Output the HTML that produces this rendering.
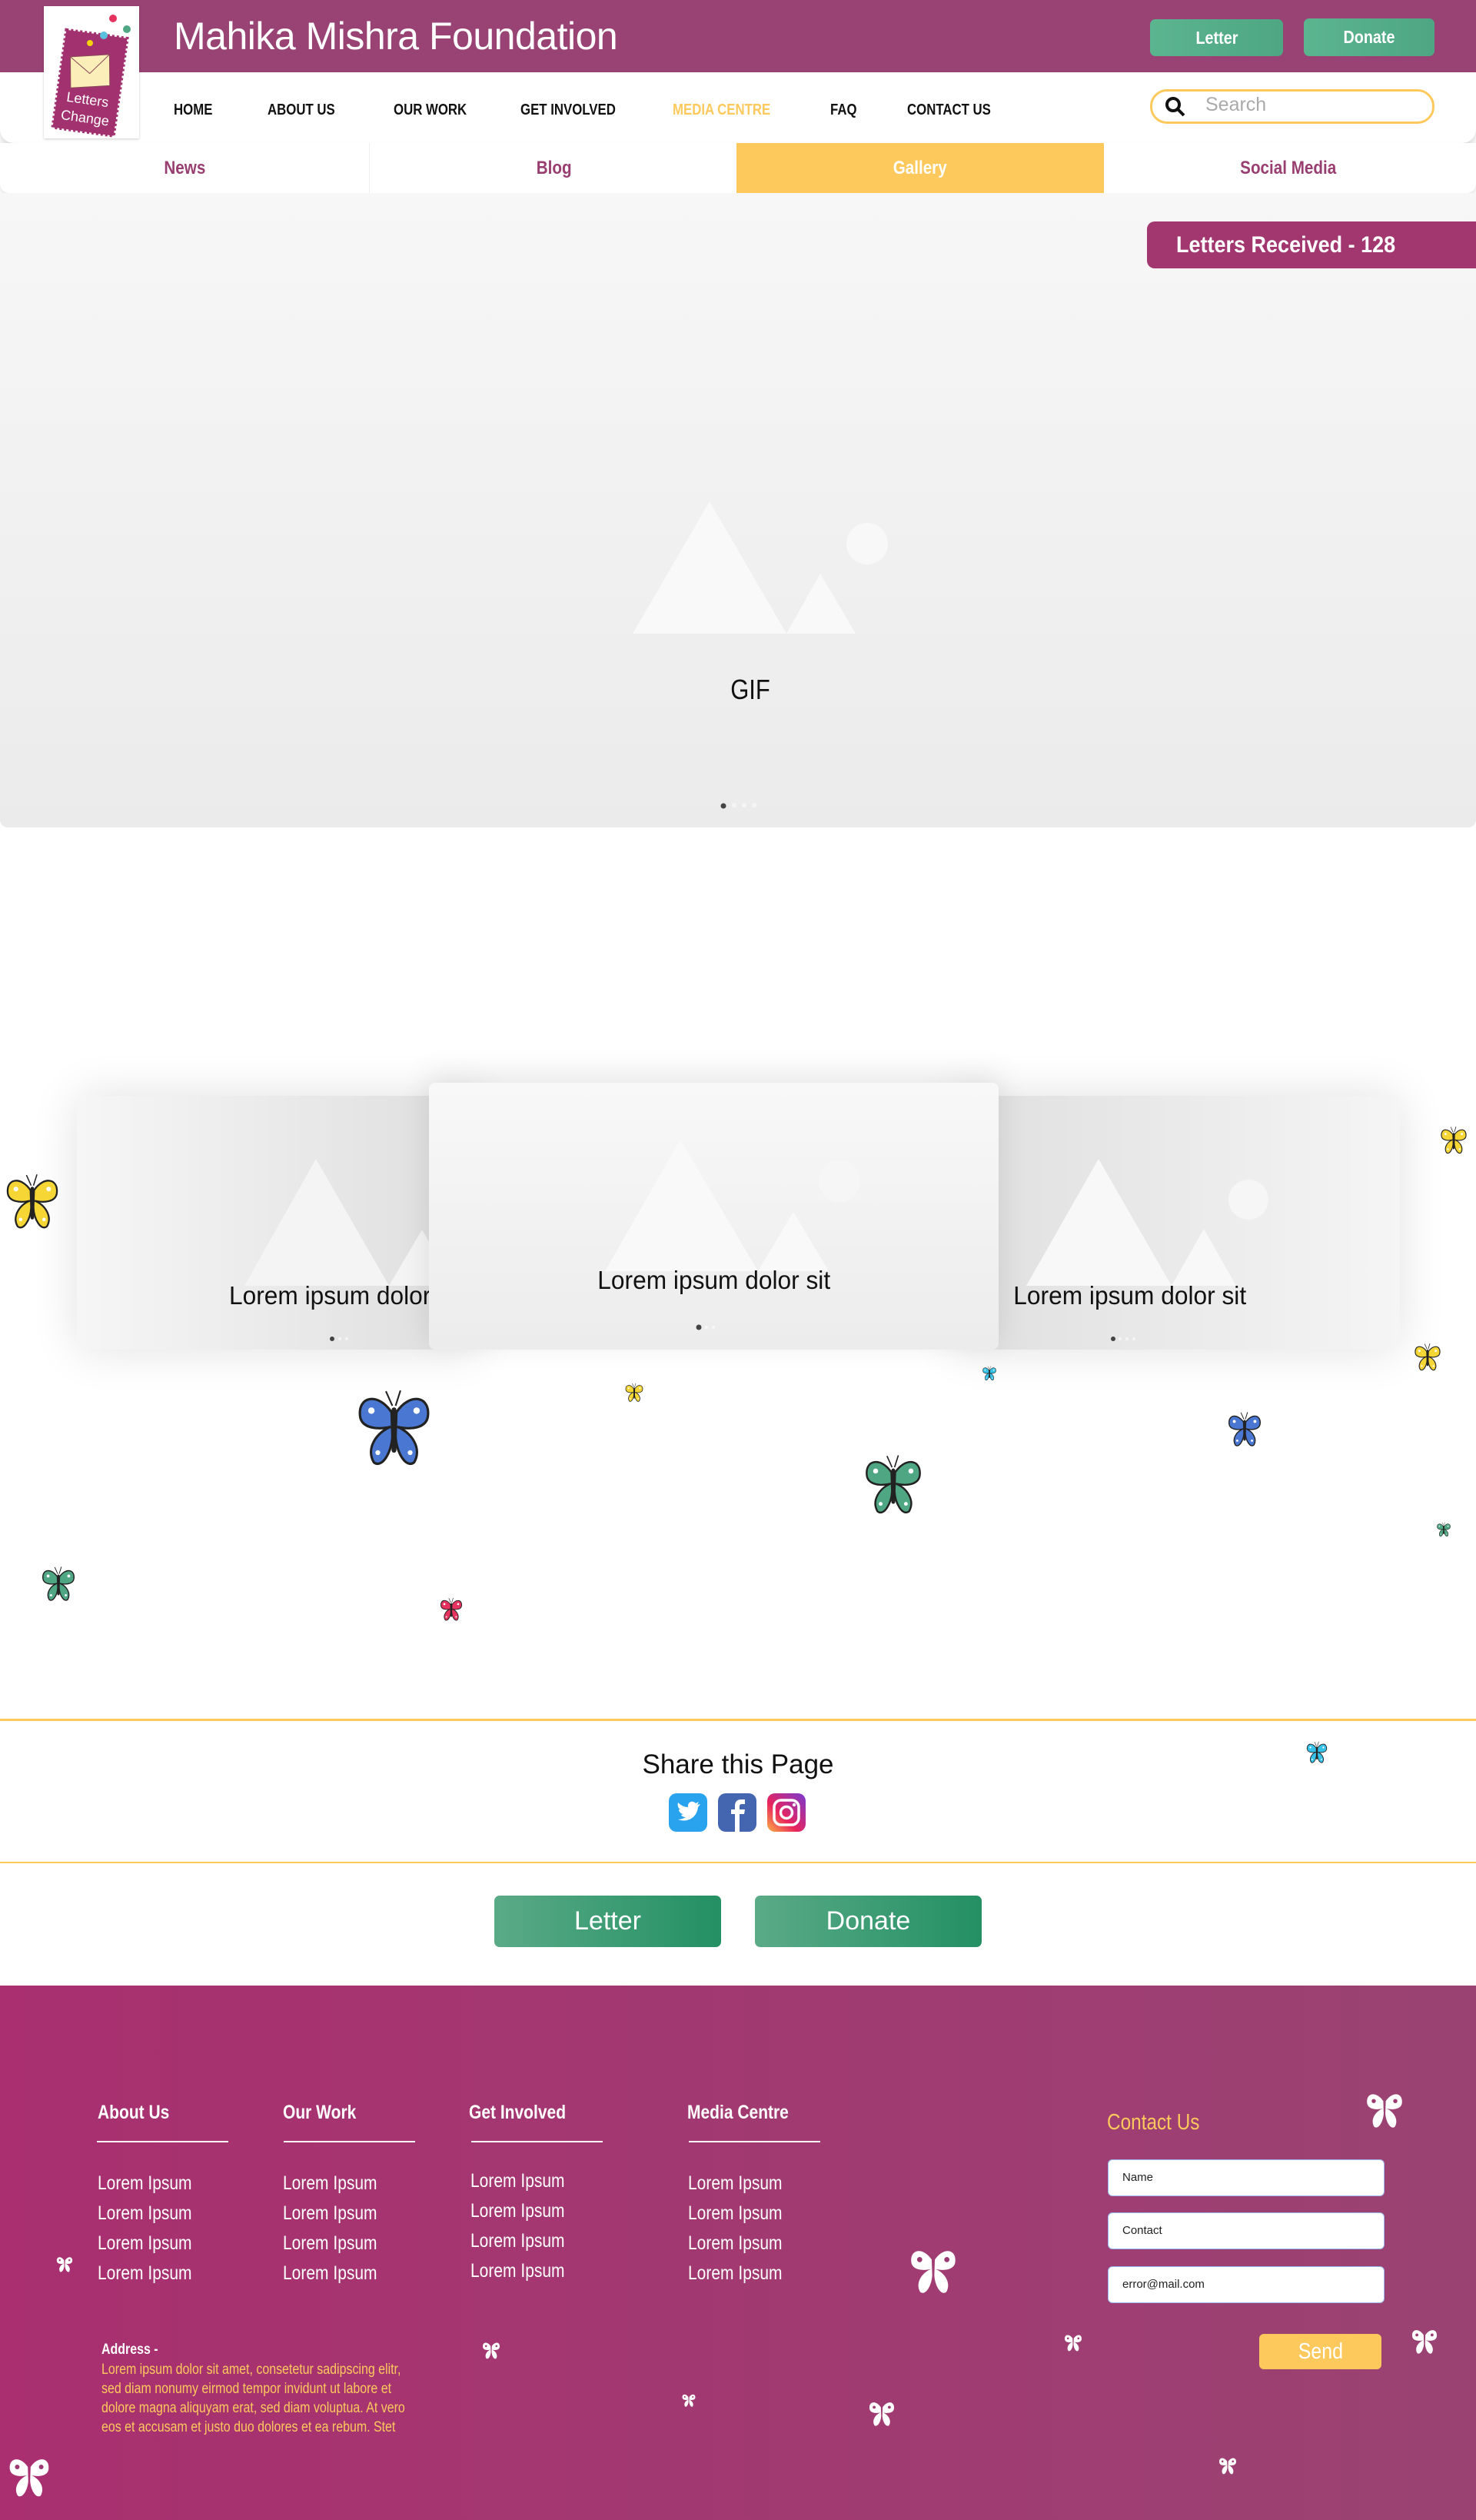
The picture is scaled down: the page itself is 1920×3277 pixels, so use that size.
<!DOCTYPE html>
<html><head><meta charset="utf-8">
<style>
*{margin:0;padding:0;box-sizing:border-box}
body{width:1920px;height:3277px;position:relative;background:#fff;font-family:"Liberation Sans Narrow","Liberation Sans",sans-serif;overflow:hidden}
.a{position:absolute}
.n{display:inline-block;transform:scaleX(.84);transform-origin:left center;white-space:nowrap}
.nc{display:inline-block;transform:scaleX(.86);transform-origin:center;white-space:nowrap}
.hdr{left:0;top:0;width:1920px;height:94px;background:#984373}
.title{left:226px;top:18px;color:#fff;font-family:"Liberation Sans",sans-serif;font-size:50px;letter-spacing:-0.5px}
.btn{background:linear-gradient(90deg,#5bb58f,#4ea683);color:#fff;border-radius:7px;text-align:center;font-weight:bold}
.nav{left:0;top:94px;width:1920px;height:92px;background:#fff;border-radius:0 0 18px 18px;box-shadow:0 6px 10px rgba(0,0,0,.15)}
.nav span{position:absolute;top:38px;font-size:20px;font-weight:bold;color:#111;transform:scaleX(.84);transform-origin:left;white-space:nowrap}
.tabs{left:0;top:186px;width:1920px;height:65px;background:#fff;border-radius:0 0 12px 12px;box-shadow:0 4px 8px rgba(0,0,0,.12)}
.tab{position:absolute;top:0;width:480px;height:65px;text-align:center;line-height:65px;font-size:24px;font-weight:bold;color:#983e70}
.hero{left:0;top:251px;width:1920px;height:825px;background:linear-gradient(#f7f7f7,#ebebeb);border-radius:0 0 10px 10px}
.card{border-radius:8px}
.cap{font-size:33px;color:#111;text-align:center}
.fh{color:#fff;font-size:25px;font-weight:bold}
.fl{color:#fff;font-size:25px}
.line{height:2px;background:#fff;width:171px}
.inp{left:1441px;width:360px;height:48px;background:#fff;border-radius:6px;border:1px solid #9ab8ee;font-size:15px;padding:0 18px;line-height:46px;color:#222;font-family:"Liberation Sans",sans-serif}
</style></head><body>
<svg width="0" height="0" style="position:absolute">
<defs>
<symbol id="bf" viewBox="0 0 100 100">
<path d="M48 22 L40 4 M52 22 L58 3" stroke="#222" stroke-width="2" fill="none"/>
<path d="M47 30 C30 5 5 10 8 35 C10 50 30 52 46 48 C28 55 15 75 25 92 C35 100 47 80 48 60 Z" fill="currentColor" stroke="#222" stroke-width="3"/>
<path d="M53 30 C70 5 95 10 92 35 C90 50 70 52 54 48 C72 55 85 75 75 92 C65 100 53 80 52 60 Z" fill="currentColor" stroke="#222" stroke-width="3"/>
<rect x="47" y="24" width="6" height="56" rx="3" fill="#222"/>
<circle cx="22" cy="28" r="4" fill="#fff"/><circle cx="78" cy="28" r="4" fill="#fff"/><circle cx="30" cy="80" r="3" fill="#fff"/><circle cx="70" cy="80" r="3" fill="#fff"/>
</symbol>
<symbol id="bw" viewBox="0 0 100 100">
<path d="M47 30 C30 5 5 10 8 35 C10 50 30 52 46 48 C28 55 15 75 25 92 C35 100 47 80 48 60 Z" fill="#fff"/>
<path d="M53 30 C70 5 95 10 92 35 C90 50 70 52 54 48 C72 55 85 75 75 92 C65 100 53 80 52 60 Z" fill="#fff"/>
<circle cx="24" cy="30" r="5" fill="#9b3a70"/><circle cx="76" cy="30" r="5" fill="#9b3a70"/>
</symbol>
</defs></svg>

<div class="a hdr"></div>
<div class="a title">Mahika Mishra Foundation</div>
<div class="a btn" style="left:1496px;top:25px;width:173px;height:48px;line-height:48px;font-size:23px"><span class="nc">Letter</span></div>
<div class="a btn" style="left:1696px;top:24px;width:170px;height:49px;line-height:49px;font-size:23px"><span class="nc">Donate</span></div>

<div class="a nav">
<span style="left:226px">HOME</span><span style="left:348px">ABOUT US</span><span style="left:512px">OUR WORK</span><span style="left:677px">GET INVOLVED</span><span style="left:875px;color:#fec95c">MEDIA CENTRE</span><span style="left:1080px">FAQ</span><span style="left:1180px">CONTACT US</span>
</div>
<div class="a" style="left:1496px;top:116px;width:370px;height:45px;border:3px solid #fec95c;border-radius:22px;background:#fff"></div>
<svg class="a" style="left:1514px;top:124px" width="30" height="30" viewBox="0 0 30 30"><circle cx="12" cy="12" r="8" stroke="#111" stroke-width="4" fill="none"/><path d="M18 18 L26 26" stroke="#111" stroke-width="4"/></svg>
<div class="a" style="left:1568px;top:122px;font-size:25px;color:#aaa;font-family:'Liberation Sans',sans-serif">Search</div>

<!-- logo -->
<div class="a" style="left:57px;top:8px;width:124px;height:172px;background:#fff;box-shadow:0 1px 3px rgba(0,0,0,.2)"></div>
<svg class="a" style="left:57px;top:8px" width="124" height="172" viewBox="0 0 124 172">
<g transform="rotate(8 62 100)"><rect x="20" y="36" width="80" height="128" fill="#a2316f" stroke="#a2316f" stroke-width="4" stroke-dasharray="3 3"/>
<path d="M30 70 L80 60 L86 100 L36 110 Z" fill="#fbeeb8" stroke="#8a4a5a"/><path d="M30 70 L58 88 L80 60" fill="none" stroke="#8a4a5a"/>
<text x="60" y="128" fill="#fff" font-size="18" text-anchor="middle" font-family="Liberation Sans">Letters</text>
<text x="60" y="152" fill="#fff" font-size="18" text-anchor="middle" font-family="Liberation Sans">Change</text></g>
<circle cx="90" cy="16" r="5" fill="#e6325f"/><circle cx="78" cy="38" r="5" fill="#5bc0de"/><circle cx="108" cy="30" r="5" fill="#4ea683"/><circle cx="60" cy="48" r="4" fill="#f5d20c"/>
</svg>

<div class="a tabs">
<div class="tab" style="left:0"><span class="nc">News</span></div>
<div class="tab" style="left:480px;border-left:1px solid #f0f0f0"><span class="nc">Blog</span></div>
<div class="tab" style="left:958px;width:478px;background:#fec95c;color:#fff"><span class="nc">Gallery</span></div>
<div class="tab" style="left:1436px"><span class="nc">Social Media</span></div>
</div>

<div class="a hero"></div>
<div class="a" style="left:1492px;top:288px;width:428px;height:61px;background:#a2366f;border-radius:10px 0 0 10px;color:#fff;font-size:30px;font-weight:bold;line-height:61px;padding-left:38px"><span class="n" style="transform:scaleX(.9)">Letters Received - 128</span></div>
<svg class="a" style="left:800px;top:640px" width="380" height="200"><path d="M23 184 L123 12 L223 184 Z M223 184 L267 106 L313 184 Z" fill="#f9f9f9"/><circle cx="328" cy="67" r="27" fill="#f8f8f8"/></svg>
<div class="a" style="left:900px;top:876px;width:152px;text-align:center;font-size:36px;color:#111;font-family:'Liberation Sans',sans-serif"><span class="nc">GIF</span></div>
<svg class="a" style="left:930px;top:1040px" width="60" height="14"><circle cx="11" cy="8" r="3.5" fill="#444"/><circle cx="25" cy="7" r="3" fill="#f5f5f5"/><circle cx="38" cy="7" r="3" fill="#f5f5f5"/><circle cx="51" cy="7" r="3" fill="#f5f5f5"/></svg>

<!-- carousel -->
<div class="a card" style="left:100px;top:1425px;width:520px;height:330px;box-shadow:0 0 60px rgba(0,0,0,.12);background:linear-gradient(90deg,#f6f6f6,#dedede)"></div>
<div class="a card" style="left:1240px;top:1425px;width:581px;height:330px;box-shadow:0 0 60px rgba(0,0,0,.12);background:linear-gradient(90deg,#dfdfdf,#f5f5f5)"></div>
<svg class="a" style="left:0;top:1400px" width="1920" height="380">
<path d="M318 272 L411 107 L506 272 Z M506 272 L549 199 L590 272 Z" fill="#f4f4f4"/>
<path d="M1335 272 L1429 107 L1524 272 Z M1524 272 L1566 198 L1608 272 Z" fill="#f8f8f8"/>
<circle cx="1624" cy="160" r="26" fill="#f6f6f6"/>
</svg>
<div class="a cap" style="left:298px;top:1666px;white-space:nowrap"><span class="n" style="transform:scaleX(.96)">Lorem ipsum dolor</span></div>
<div class="a cap" style="left:1280px;top:1666px;width:380px"><span class="nc" style="transform:scaleX(.96)">Lorem ipsum dolor sit</span></div>
<svg class="a" style="left:425px;top:1736px" width="40" height="10"><circle cx="7" cy="5" r="3" fill="#444"/><circle cx="17" cy="5" r="2" fill="#f5f5f5"/><circle cx="26" cy="5" r="2" fill="#f5f5f5"/></svg>
<svg class="a" style="left:1442px;top:1736px" width="40" height="10"><circle cx="6" cy="5" r="3" fill="#444"/><circle cx="15" cy="5" r="2" fill="#f5f5f5"/><circle cx="24" cy="5" r="2" fill="#f5f5f5"/><circle cx="33" cy="5" r="2" fill="#f5f5f5"/></svg>

<div class="a card" style="left:558px;top:1408px;width:741px;height:347px;box-shadow:0 -10px 40px rgba(0,0,0,.1);background:linear-gradient(#f8f8f8,#ececec)"></div>
<svg class="a" style="left:558px;top:1408px" width="741" height="347">
<path d="M229 245 L327 74 L428 245 Z M428 245 L474 168 L520 245 Z" fill="#f9f9f9"/>
<circle cx="534" cy="128" r="27" fill="#f6f6f6"/>
</svg>
<div class="a cap" style="left:729px;top:1646px;width:400px"><span class="nc" style="transform:scaleX(.96)">Lorem ipsum dolor sit</span></div>
<svg class="a" style="left:900px;top:1721px" width="60" height="10"><circle cx="9" cy="5" r="3.5" fill="#444"/><circle cx="19" cy="5" r="2" fill="#f7f7f7"/><circle cx="28" cy="5" r="2" fill="#f7f7f7"/></svg>

<!-- butterflies -->
<svg class="a" style="left:4px;top:1525px;color:#f5d634" width="76" height="76"><use href="#bf"/></svg>
<svg class="a" style="left:1872px;top:1464px;color:#f5d634" width="38" height="38"><use href="#bf"/></svg>
<svg class="a" style="left:1838px;top:1746px;color:#f5d634" width="38" height="38"><use href="#bf"/></svg>
<svg class="a" style="left:460px;top:1805px;color:#4a77d1" width="105" height="105"><use href="#bf"/></svg>
<svg class="a" style="left:812px;top:1798px;color:#f5d634" width="26" height="26"><use href="#bf"/></svg>
<svg class="a" style="left:1277px;top:1776px;color:#36c1e8" width="20" height="20"><use href="#bf"/></svg>
<svg class="a" style="left:1121px;top:1890px;color:#4ea683" width="82" height="82"><use href="#bf"/></svg>
<svg class="a" style="left:1595px;top:1835px;color:#4a77d1" width="48" height="48"><use href="#bf"/></svg>
<svg class="a" style="left:1868px;top:1979px;color:#4ea683" width="20" height="20"><use href="#bf"/></svg>
<svg class="a" style="left:52px;top:2036px;color:#4ea683" width="48" height="48"><use href="#bf"/></svg>
<svg class="a" style="left:571px;top:2077px;color:#e6325f" width="32" height="32"><use href="#bf"/></svg>
<svg class="a" style="left:1698px;top:2264px;color:#36c1e8" width="30" height="30"><use href="#bf"/></svg>

<!-- share -->
<div class="a" style="left:0;top:2235px;width:1920px;height:3px;background:#fec95c"></div>
<div class="a" style="left:760px;top:2275px;width:400px;text-align:center;font-size:35px;color:#111;font-family:'Liberation Sans',sans-serif">Share this Page</div>
<svg class="a" style="left:870px;top:2332px" width="180" height="50">
<rect x="0" y="0" width="50" height="50" rx="10" fill="#2aa3ef"/>
<path d="M12 34 C22 38 36 34 38 18 L41 14 L37 15 L39 11 L35 13 C30 8 24 12 25 18 C19 18 15 15 12 12 C11 16 12 19 15 21 L13 21 C13 24 16 27 19 27 L16 28 C17 30 19 31 22 31 C19 33 16 34 12 34 Z" fill="#fff"/>
<rect x="64" y="0" width="50" height="50" rx="10" fill="#4466b0"/>
<path d="M92 50 L92 27 L98 27 L99 21 L92 21 L92 17 C92 15 93 14 95 14 L99 14 L99 8 L94 8 C88 8 86 12 86 16 L86 21 L81 21 L81 27 L86 27 L86 50 Z" fill="#fff"/>
<defs><linearGradient id="ig" x1="0" y1="1" x2="1" y2="0"><stop offset="0" stop-color="#fcb045"/><stop offset=".4" stop-color="#e8245d"/><stop offset="1" stop-color="#7a3ad0"/></linearGradient></defs>
<rect x="128" y="0" width="50" height="50" rx="10" fill="url(#ig)"/>
<rect x="137" y="9" width="32" height="32" rx="9" fill="none" stroke="#fff" stroke-width="3.5"/><circle cx="153" cy="25" r="7.5" fill="none" stroke="#fff" stroke-width="3.5"/><circle cx="163" cy="15" r="2.2" fill="#fff"/>
</svg>
<div class="a" style="left:0;top:2421px;width:1920px;height:2px;background:#fec95c"></div>
<div class="a btn" style="left:643px;top:2465px;width:295px;height:67px;line-height:67px;font-size:34px;font-weight:normal;font-family:'Liberation Sans',sans-serif;background:linear-gradient(90deg,#5aaa86,#239063)">Letter</div>
<div class="a btn" style="left:982px;top:2465px;width:295px;height:67px;line-height:67px;font-size:34px;font-weight:normal;font-family:'Liberation Sans',sans-serif;background:linear-gradient(90deg,#5aaa86,#239063)">Donate</div>

<!-- footer -->
<div class="a" style="left:0;top:2582px;width:1920px;height:695px;background:linear-gradient(90deg,#a92f70,#9a4372)"></div>
<div class="a fh" style="left:127px;top:2733px"><span class="n">About Us</span></div>
<div class="a fh" style="left:368px;top:2733px"><span class="n">Our Work</span></div>
<div class="a fh" style="left:610px;top:2733px"><span class="n">Get Involved</span></div>
<div class="a fh" style="left:894px;top:2733px"><span class="n">Media Centre</span></div>
<div class="a line" style="left:126px;top:2784px"></div>
<div class="a line" style="left:369px;top:2784px"></div>
<div class="a line" style="left:613px;top:2784px"></div>
<div class="a line" style="left:896px;top:2784px"></div>
<div class="a fl" style="left:127px;top:2820px;line-height:39px"><span class="n">Lorem Ipsum<br>Lorem Ipsum<br>Lorem Ipsum<br>Lorem Ipsum</span></div>
<div class="a fl" style="left:368px;top:2820px;line-height:39px"><span class="n">Lorem Ipsum<br>Lorem Ipsum<br>Lorem Ipsum<br>Lorem Ipsum</span></div>
<div class="a fl" style="left:612px;top:2817px;line-height:39px"><span class="n">Lorem Ipsum<br>Lorem Ipsum<br>Lorem Ipsum<br>Lorem Ipsum</span></div>
<div class="a fl" style="left:895px;top:2820px;line-height:39px"><span class="n">Lorem Ipsum<br>Lorem Ipsum<br>Lorem Ipsum<br>Lorem Ipsum</span></div>
<div class="a" style="left:1440px;top:2744px;color:#fec95c;font-size:29px"><span class="n">Contact Us</span></div>
<div class="a inp" style="top:2808px">Name</div>
<div class="a inp" style="top:2877px">Contact</div>
<div class="a inp" style="top:2947px">error@mail.com</div>
<div class="a" style="left:1638px;top:3035px;width:159px;height:46px;background:#fec95c;border-radius:6px;color:#fff;font-size:29px;text-align:center;line-height:46px"><span class="nc">Send</span></div>
<div class="a" style="left:132px;top:3045px;color:#fff;font-size:19px;font-weight:bold"><span class="n">Address -</span></div>
<div class="a" style="left:132px;top:3069px;width:560px;color:#fec95c;font-size:19px;line-height:25px;transform:scaleX(.84);transform-origin:left top">Lorem ipsum dolor sit amet, consetetur sadipscing elitr,<br>sed diam nonumy eirmod tempor invidunt ut labore et<br>dolore magna aliquyam erat, sed diam voluptua. At vero<br>eos et accusam et justo duo dolores et ea rebum. Stet</div>

<svg class="a" style="left:1774px;top:2716px" width="54" height="54"><use href="#bw"/></svg>
<svg class="a" style="left:72px;top:2932px" width="24" height="24"><use href="#bw"/></svg>
<svg class="a" style="left:1180px;top:2918px" width="68" height="68"><use href="#bw"/></svg>
<svg class="a" style="left:626px;top:3043px" width="26" height="26"><use href="#bw"/></svg>
<svg class="a" style="left:1383px;top:3033px" width="26" height="26"><use href="#bw"/></svg>
<svg class="a" style="left:1834px;top:3025px" width="38" height="38"><use href="#bw"/></svg>
<svg class="a" style="left:886px;top:3111px" width="20" height="20"><use href="#bw"/></svg>
<svg class="a" style="left:1128px;top:3119px" width="38" height="38"><use href="#bw"/></svg>
<svg class="a" style="left:1584px;top:3193px" width="26" height="26"><use href="#bw"/></svg>
<svg class="a" style="left:8px;top:3190px" width="60" height="60"><use href="#bw"/></svg>
</body></html>
